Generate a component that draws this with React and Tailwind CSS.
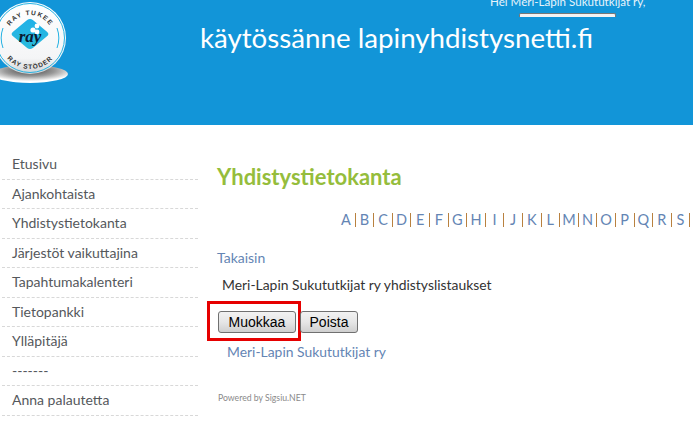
const menu = [
  "Etusivu",
  "Ajankohtaista",
  "Yhdistystietokanta",
  "Järjestöt vaikuttajina",
  "Tapahtumakalenteri",
  "Tietopankki",
  "Ylläpitäjä",
  "-------",
  "Anna palautetta",
];

const letters = "ABCDEFGHIJKLMNOPQRS".split("");

const Logo = () => (
  <svg width="70" height="84" viewBox="0 0 70 84" className="shrink-0">
    <defs>
      <radialGradient id="shadow" cx="50%" cy="30%" r="60%">
        <stop offset="0%" stopColor="#444" />
        <stop offset="55%" stopColor="#9a9a9a" />
        <stop offset="100%" stopColor="#fff" />
      </radialGradient>
      <linearGradient id="ball" x1="0" y1="0" x2="0" y2="1">
        <stop offset="0%" stopColor="#ffffff" />
        <stop offset="78%" stopColor="#f4f5f6" />
        <stop offset="100%" stopColor="#d2d4d6" />
      </linearGradient>
      <linearGradient id="diamond" x1="0" y1="0" x2="1" y2="1">
        <stop offset="0%" stopColor="#1fb0e8" />
        <stop offset="100%" stopColor="#2bbbdc" />
      </linearGradient>
      <path id="arcTop" d="M 6 39 A 24 24 0 0 1 54 39" />
      <path id="arcBottom" d="M 0 39 A 30 30 0 0 0 60 39" />
    </defs>
    <ellipse cx="30" cy="74" rx="38" ry="9" fill="url(#shadow)" />
    <circle cx="30" cy="38" r="36" fill="url(#ball)" />
    <circle cx="30" cy="38" r="34.5" fill="none" stroke="#25b2e3" strokeWidth="1" />
    <path d="M 3 48 A 29 29 0 0 1 3 28" fill="none" stroke="#25b2e3" strokeWidth="1" />
    <path d="M 57 28 A 29 29 0 0 1 57 48" fill="none" stroke="#25b2e3" strokeWidth="1" />
    <rect x="-14" y="-14" width="28" height="28" rx="4" fill="url(#diamond)" transform="translate(30 34) scale(1 0.82) rotate(45)" />
    <circle cx="37" cy="26" r="2.4" fill="#fff" />
    <circle cx="33" cy="30" r="2.6" fill="#fff" />
    <circle cx="37" cy="32" r="2.4" fill="#fff" />
    <text x="30" y="42" textAnchor="middle" fontFamily="'Liberation Serif', serif" fontStyle="italic" fontWeight="700" fontSize="17" fill="#0a1a30">ray</text>
    <text fontFamily="'Liberation Sans', sans-serif" fontWeight="700" fontSize="6.5" letterSpacing="1.2" fill="#333" textAnchor="middle">
      <textPath href="#arcTop" startOffset="50%">RAY TUKEE</textPath>
    </text>
    <text fontFamily="'Liberation Sans', sans-serif" fontWeight="700" fontSize="6.5" letterSpacing="1" fill="#333" textAnchor="middle">
      <textPath href="#arcBottom" startOffset="50%">RAY STÖDER</textPath>
    </text>
  </svg>
);

const btn =
  "h-[22px] rounded-[3px] border border-[#707070] bg-gradient-to-b from-[#f2f2f2] via-[#e6e6e6] to-[#cfcfcf] text-[14px] text-black font-['Liberation_Sans',sans-serif] leading-none";

export default function App() {
  return (
    <div className="w-[693px] h-[422px] overflow-hidden bg-white font-['Lato',sans-serif]">
      <header className="h-[125px] bg-[#1295d8] flex overflow-hidden">
        <Logo />
        <h1 className="ml-[130px] mt-[21px] text-[27.7px] leading-[34px] font-normal text-white whitespace-nowrap h-[34px] w-[393px] shrink-0">
          käytössänne lapinyhdistysnetti.fi
        </h1>
        <div className="relative">
          <div className="absolute left-[-103px] top-[-6px] text-[11.6px] leading-[16px] text-[#e8f4fb] whitespace-nowrap">
            Hei Meri-Lapin Sukututkijat ry,
          </div>
          <div className="absolute left-[-74px] top-[13px] w-[97px] h-[4px] bg-[#f4f4f4] border-t border-x border-[#777] rounded-t-[2px]"></div>
        </div>
      </header>

      <div className="flex">
        <nav className="w-[198px] shrink-0 pt-[25px]">
          {menu.map((item) => (
            <div
              key={item}
              className="h-[29.5px] ml-[2px] pl-[10px] border-b border-dashed border-[#d8d8d8] text-[14px] leading-[28px] text-[#55585c] whitespace-nowrap"
            >
              {item}
            </div>
          ))}
        </nav>

        <main className="pl-[19px] flex-1 min-w-0">
          <h2 className="mt-[39px] text-[22px] leading-[26px] font-bold text-[#95bd3c]">Yhdistystietokanta</h2>

          <div className="mt-[21px] ml-[120px] flex items-center h-[18px] text-[14.5px] text-[#6485b4] whitespace-nowrap">
            {letters.map((l) => (
              <span key={l} className="flex items-center h-[18px]">
                <span className="w-[17.6px] text-center">{l}</span>
                <span className="w-px h-[14px] bg-[#b9813f]"></span>
              </span>
            ))}
          </div>

          <div className="mt-[20px] text-[14px] leading-[18px] text-[#6485b4]">Takaisin</div>
          <div className="mt-[9px] ml-[5px] text-[13.9px] leading-[18px] text-[#333]">
            Meri-Lapin Sukututkijat ry yhdistyslistaukset
          </div>

          <div className="mt-[7px] flex items-start h-[40px]">
            <div className="ml-[-10px] w-[94px] h-[40px] border-[3px] border-[#e60000] flex items-center justify-end pt-[2px] pr-[2px] shrink-0">
              <button className={`${btn} w-[78px]`}>Muokkaa</button>
            </div>
            <button className={`${btn} w-[58px] ml-[-1px] mt-[10px]`}>Poista</button>
          </div>

          <div className="mt-[2px] ml-[10px] text-[13.9px] leading-[18px] text-[#6485b4]">Meri-Lapin Sukututkijat ry</div>
          <div className="mt-[31px] ml-[1px] text-[8.7px] leading-[12px] text-[#8a8a8a]">Powered by Sigsiu.NET</div>
        </main>
      </div>
    </div>
  );
}
